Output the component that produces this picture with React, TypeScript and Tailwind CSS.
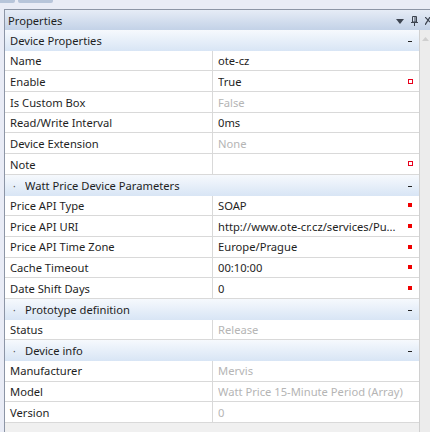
import React from 'react';

type Row =
    | { kind: 'header'; title: string; dot?: boolean }
    | { kind: 'prop'; name: string; value: string; muted?: boolean; mark?: 'hollow' | 'solid' };

const rows: Row[] = [
    { kind: 'header', title: 'Device Properties' },
    { kind: 'prop', name: 'Name', value: 'ote-cz' },
    { kind: 'prop', name: 'Enable', value: 'True', mark: 'hollow' },
    { kind: 'prop', name: 'Is Custom Box', value: 'False', muted: true },
    { kind: 'prop', name: 'Read/Write Interval', value: '0ms' },
    { kind: 'prop', name: 'Device Extension', value: 'None', muted: true },
    { kind: 'prop', name: 'Note', value: '', mark: 'hollow' },
    { kind: 'header', title: 'Watt Price Device Parameters', dot: true },
    { kind: 'prop', name: 'Price API Type', value: 'SOAP', mark: 'solid' },
    { kind: 'prop', name: 'Price API URI', value: 'http://www.ote-cr.cz/services/Pu...', mark: 'solid' },
    { kind: 'prop', name: 'Price API Time Zone', value: 'Europe/Prague', mark: 'solid' },
    { kind: 'prop', name: 'Cache Timeout', value: '00:10:00', mark: 'solid' },
    { kind: 'prop', name: 'Date Shift Days', value: '0', mark: 'solid' },
    { kind: 'header', title: 'Prototype definition', dot: true },
    { kind: 'prop', name: 'Status', value: 'Release', muted: true },
    { kind: 'header', title: 'Device info', dot: true },
    { kind: 'prop', name: 'Manufacturer', value: 'Mervis', muted: true },
    { kind: 'prop', name: 'Model', value: 'Watt Price 15-Minute Period (Array)', muted: true },
    { kind: 'prop', name: 'Version', value: '0', muted: true },
];

const HeaderRow: React.FC<{ title: string; dot?: boolean }> = ({ title, dot }) => (
    <div className="h-[20.7px] flex items-center bg-gradient-to-b from-[#f6f9fd] to-[#d8e5f5] pl-[5px] pr-[6px] pt-[2px]">
        {dot && <span className="w-[15px] text-[#555] text-[10px] pl-[3px]">·</span>}
        <span className="flex-1 truncate">{title}</span>
        <span className="w-[4px] h-[1px] bg-[#222] mr-[1px]" />
    </div>
);

const PropRow: React.FC<{ name: string; value: string; muted?: boolean; mark?: 'hollow' | 'solid' }> = ({
    name,
    value,
    muted,
    mark,
}) => (
    <div className="h-[20.7px] flex bg-white border-b border-[#d9d9d9]">
        <div className="w-[208px] flex-shrink-0 flex items-center pl-[5px] pt-[2px] border-r border-[#d9d9d9] truncate">
            {name}
        </div>
        <div className="flex-1 min-w-0 flex items-center pl-[5px] pr-[6px]">
            <span className={`flex-1 truncate whitespace-nowrap overflow-hidden pt-[2px] ${muted ? 'text-[#b5b5b5]' : ''}`}>
                {value}
            </span>
            {mark === 'hollow' && <span className="w-[5px] h-[5px] border border-[#e8001c] flex-shrink-0" />}
            {mark === 'solid' && <span className="w-[4px] h-[4px] bg-[#f00000] flex-shrink-0 mr-[1px]" />}
        </div>
    </div>
);

export default function App() {
    return (
        <div
            className="w-[430px] h-[432px] bg-[#e9ecf6] overflow-hidden text-[11.2px] text-[#1e1e1e] flex flex-col"
            style={{ fontFamily: '"Noto Sans", "Open Sans", sans-serif' }}
        >
            {/* tab strip */}
            <div className="h-[9px] flex gap-[3px] flex-shrink-0">
                <div className="w-[15px] h-[3px] bg-[#b7c5da] rounded-br-[2px]" />
                <div className="w-[35px] h-[3px] bg-[#b7c5da] rounded-b-[2px]" />
            </div>

            <div className="ml-[4px] flex-1 flex flex-col border-l border-t border-[#8c95a6] min-h-0">
                {/* title bar */}
                <div className="h-[20px] flex items-center bg-gradient-to-b from-[#e6ecf6] to-[#c3d2e7] pl-[3px] pt-[2px] flex-shrink-0">
                    <span className="flex-1">Properties</span>
                    <svg width="8" height="5" viewBox="0 0 8 5" className="mr-[7px]">
                        <path d="M0 0 H8 L4 5 Z" fill="#3d4450" />
                    </svg>
                    <svg width="7" height="10" viewBox="0 0 7 10" className="mr-[7px]">
                        <path d="M1.5 0.5 H5.5 V6 H1.5 Z M0 6.5 H7 M3.5 6.5 V10" stroke="#3d4450" strokeWidth="1" fill="none" />
                        <path d="M4 1 V6" stroke="#3d4450" strokeWidth="1" />
                    </svg>
                    <svg width="5" height="8" viewBox="0 0 5 8">
                        <path d="M0 0 L5 5 M5 0 L0 8" stroke="#3d4450" strokeWidth="1.2" fill="none" />
                    </svg>
                </div>

                {/* grid + scrollbar */}
                <div className="flex-1 flex min-h-0">
                    <div className="w-[415px] bg-[#f0f0f0] border-r border-[#d0d0d0] flex flex-col">
                        {rows.map((r, i) =>
                            r.kind === 'header' ? (
                                <HeaderRow key={i} title={r.title} dot={r.dot} />
                            ) : (
                                <PropRow key={i} name={r.name} value={r.value} muted={r.muted} mark={r.mark} />
                            )
                        )}
                    </div>
                    <div className="flex-1 bg-[#ececec] flex justify-center pt-[7px]">
                        <svg width="7" height="4" viewBox="0 0 7 4">
                            <path d="M0 4 L3.5 0 L7 4 Z" fill="#cfcfcf" />
                        </svg>
                    </div>
                </div>
            </div>
        </div>
    );
}
